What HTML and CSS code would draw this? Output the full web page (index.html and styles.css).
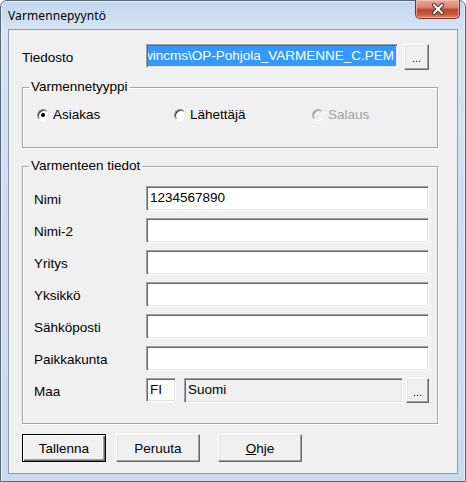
FILE: index.html
```html
<!DOCTYPE html>
<html>
<head>
<meta charset="utf-8">
<link rel="stylesheet" href="styles.css">
</head>
<body>
<div class="window">
  <div class="titlebar">
    <div class="title">Varmennepyyntö</div>
    <div class="close">
      <svg width="14" height="12" viewBox="0 0 14 12">
        <path d="M3 2 L11 10 M11 2 L3 10" stroke="#4a2a22" stroke-width="4" stroke-linecap="round"/>
        <path d="M3 2 L11 10 M11 2 L3 10" stroke="#ffffff" stroke-width="2.2" stroke-linecap="round"/>
      </svg>
    </div>
  </div>
  <div class="client">
    <div class="filerow">
      <div class="lbl-file">Tiedosto</div>
      <div class="edit edit-file"><span class="sel"><span class="seltext">\wincms\OP-Pohjola_VARMENNE_C.PEM</span></span></div>
      <div class="btn btn-dots btn-dots-file">...</div>
    </div>

    <fieldset class="group group-type">
      <legend>Varmennetyyppi</legend>
      <div class="radios">
        <div class="radio"><span class="circle checked"></span><span>Asiakas</span></div>
        <div class="radio"><span class="circle"></span><span>Lähettäjä</span></div>
        <div class="radio disabled"><span class="circle"></span><span>Salaus</span></div>
      </div>
    </fieldset>

    <fieldset class="group group-info">
      <legend>Varmenteen tiedot</legend>
      <div class="form">
        <div class="row"><div class="lbl">Nimi</div><div class="edit edit-wide">1234567890</div></div>
        <div class="row"><div class="lbl">Nimi-2</div><div class="edit edit-wide"></div></div>
        <div class="row"><div class="lbl">Yritys</div><div class="edit edit-wide"></div></div>
        <div class="row"><div class="lbl">Yksikkö</div><div class="edit edit-wide"></div></div>
        <div class="row"><div class="lbl">Sähköposti</div><div class="edit edit-wide"></div></div>
        <div class="row"><div class="lbl">Paikkakunta</div><div class="edit edit-wide"></div></div>
        <div class="row">
          <div class="lbl">Maa</div>
          <div class="edit edit-code">FI</div>
          <div class="edit edit-country">Suomi</div>
          <div class="btn btn-dots btn-dots-country">...</div>
        </div>
      </div>
    </fieldset>

    <div class="buttons">
      <div class="btn btn-main btn-default">Tallenna</div>
      <div class="btn btn-main btn-cancel">Peruuta</div>
      <div class="btn btn-main btn-help"><u>O</u>hje</div>
    </div>
  </div>
</div>
</body>
</html>
```

FILE: styles.css
```css
html, body {
  margin: 0;
  padding: 0;
  background: #ffffff;
}

body {
  font-family: "Liberation Sans", Arial, sans-serif;
  font-size: 13.5px;
  color: #000;
}

.window {
  width: 466px;
  height: 482px;
  box-sizing: border-box;
  border: 1px solid #56677c;
  border-radius: 7px 7px 0 0;
  background: linear-gradient(180deg, #c2d7ee 0%, #d6e4f3 6%, #cfe0f2 40%, #c8dbef 100%);
  box-shadow: inset 1px 1px 0 #e8f0f8, inset -1px 0 0 #e8f0f8;
  display: flex;
  flex-direction: column;
}

.titlebar {
  height: 28px;
  display: flex;
  align-items: flex-start;
  flex: none;
}

.title {
  font-family: "Noto Sans", "DejaVu Sans", sans-serif;
  font-size: 12px;
  padding: 6px 0 0 7px;
  color: #000;
  letter-spacing: 0.1px;
}

.close {
  margin-left: auto;
  margin-right: 5px;
  margin-top: -1px;
  width: 45px;
  height: 19px;
  box-sizing: border-box;
  border: 1px solid #7b3328;
  border-top: none;
  border-radius: 0 0 5px 5px;
  background: linear-gradient(180deg, #e7a796 0%, #d98672 40%, #c0432d 55%, #c95a40 80%, #dd8d6c 100%);
  box-shadow: inset 0 0 0 1px rgba(255, 220, 200, 0.5);
  display: flex;
  align-items: center;
  justify-content: center;
}

.close svg {
  display: block;
}

.client {
  margin: 0 7px 0 7px;
  height: 445px;
  box-sizing: border-box;
  border: 1px solid #8c9db2;
  background: #f0f0f0;
  padding: 14px 0 0 13px;
  flex: none;
}

.filerow {
  display: flex;
  align-items: flex-start;
  height: 26px;
}

.lbl-file {
  width: 124px;
  padding-top: 6px;
  line-height: 15px;
}

.edit {
  box-sizing: border-box;
  background: #fff;
  border-style: solid;
  border-width: 1px;
  border-color: #a0a0a0 #ffffff #ffffff #a0a0a0;
  box-shadow: inset 1px 1px 0 #696969, inset -1px -1px 0 #e3e3e3;
  height: 25px;
  line-height: 15px;
  padding: 3px 2px 0 3px;
  white-space: nowrap;
  overflow: hidden;
}

.edit-file {
  width: 252px;
  height: 24px;
  padding: 1px 1px 1px 1px;
  background: #fff;
}

.sel {
  display: flex;
  justify-content: flex-end;
  height: 20px;
  background: #3399ff;
  color: #fff;
  line-height: 20px;
  padding-right: 2px;
  overflow: hidden;
}

.seltext {
  flex: none;
  white-space: nowrap;
}

.btn {
  box-sizing: border-box;
  background: #f0f0f0;
  border-style: solid;
  border-width: 1px;
  border-color: #ffffff #696969 #696969 #ffffff;
  box-shadow: inset -1px -1px 0 #a0a0a0, inset 1px 1px 0 #e3e3e3;
  display: flex;
  align-items: center;
  justify-content: center;
  color: #000;
}

.btn-dots {
  font-size: 11px;
  line-height: 11px;
  padding-top: 3px;
}

.btn-dots-file {
  width: 25px;
  height: 26px;
  margin-left: 6px;
}

.group {
  margin: 0;
  padding: 0;
  border: 1px solid #a5a5a5;
  box-shadow: inset 1px 1px 0 #ffffff, 1px 1px 0 #ffffff;
  width: 416px;
  box-sizing: border-box;
  min-width: 0;
}

.group legend {
  margin-left: 6px;
  padding: 0 2px;
  line-height: 14px;
  font-size: 13.5px;
}

.group-type {
  margin-top: 10px;
  height: 68px;
}

.radios {
  display: grid;
  grid-template-columns: 137px 138px auto;
  padding: 14px 0 0 14px;
}

.radio {
  display: flex;
  align-items: center;
  gap: 4px;
  line-height: 14px;
}

.circle {
  width: 12px;
  height: 12px;
  box-sizing: border-box;
  border-radius: 50%;
  border: 1px solid;
  border-color: #8a8a8a #e8e8e8 #ffffff #8a8a8a;
  box-shadow: inset 1px 1px 0 #404040;
  background: #fff;
  position: relative;
  flex: none;
}

.circle.checked::after {
  content: "";
  position: absolute;
  left: 3px;
  top: 3px;
  width: 4px;
  height: 4px;
  border-radius: 50%;
  background: #000;
}

.radio.disabled {
  color: #a0a0a0;
}

.radio.disabled .circle {
  background: #f0f0f0;
  border-color: #b0b0b0 #f8f8f8 #ffffff #b0b0b0;
  box-shadow: inset 1px 1px 0 #a0a0a0;
}

.group-info {
  margin-top: 11px;
  height: 265px;
}

.form {
  display: flex;
  flex-direction: column;
  gap: 7px;
  padding: 13px 0 0 11px;
}

.row {
  display: flex;
  align-items: flex-start;
  height: 25px;
}

.lbl {
  width: 112px;
  padding-top: 6px;
  line-height: 15px;
  flex: none;
}

.edit-wide {
  width: 283px;
}

.edit-code {
  width: 30px;
  height: 24px;
}

.edit-country {
  width: 219px;
  margin-left: 8px;
  background: #f0f0f0;
  height: 25px;
}

.btn-dots-country {
  width: 23px;
  height: 25px;
  margin-left: 3px;
}

.buttons {
  display: flex;
  margin-top: 10px;
}

.btn-main {
  width: 84px;
  height: 28px;
  font-size: 13.5px;
}

.btn-default {
  border: 1px solid #000;
  box-shadow: inset 1px 1px 0 #ffffff, inset -1px -1px 0 #696969, inset -2px -2px 0 #a0a0a0;
}

.btn-cancel {
  margin-left: 10px;
}

.btn-help {
  margin-left: 18px;
}
```
